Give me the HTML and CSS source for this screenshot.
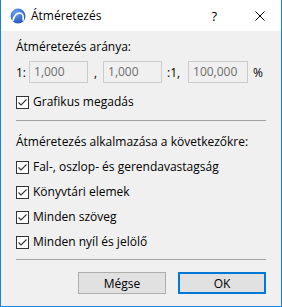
FILE: index.html
```html
<!DOCTYPE html>
<html>
<head>
<meta charset="utf-8">
<link rel="stylesheet" href="styles.css">
</head>
<body>
<div class="window">
  <div class="titlebar">
    <svg class="appicon" width="16" height="16" viewBox="0 0 16 16">
      <defs>
        <radialGradient id="g" cx="0.35" cy="0.3" r="0.8">
          <stop offset="0" stop-color="#6fa3ee"/>
          <stop offset="1" stop-color="#1d4fb8"/>
        </radialGradient>
      </defs>
      <circle cx="8" cy="8" r="7.5" fill="url(#g)"/>
      <path d="M3 12.5 C4 7 8 4 11.5 5.5 C13 6.5 13.5 9 13 12" fill="none" stroke="#fff" stroke-width="1.6" stroke-linecap="round"/>
    </svg>
    <span class="title">Átméretezés</span>
    <span class="help">?</span>
    <svg class="close" width="10" height="10" viewBox="0 0 10 10">
      <path d="M0.5 0.5 L9.5 9.5 M9.5 0.5 L0.5 9.5" stroke="#000" stroke-width="1"/>
    </svg>
  </div>
  <div class="content">
    <div class="label first">Átméretezés aránya:</div>
    <div class="ratio">
      <span class="one">1:</span>
      <span class="field f1">1,000</span>
      <span class="comma">,</span>
      <span class="field f2">1,000</span>
      <span class="colon">:1,</span>
      <span class="field f3">100,000</span>
      <span class="pct">%</span>
    </div>
    <div class="check graf"><span class="box"><svg width="11" height="11" viewBox="0 0 11 11"><path d="M1.5 5.5 L4 8 L9.5 2.5" fill="none" stroke="#333" stroke-width="1.1"/></svg></span>Grafikus megadás</div>
    <div class="sep"></div>
    <div class="label second">Átméretezés alkalmazása a következőkre:</div>
    <div class="checks">
      <div class="check"><span class="box"><svg width="11" height="11" viewBox="0 0 11 11"><path d="M1.5 5.5 L4 8 L9.5 2.5" fill="none" stroke="#333" stroke-width="1.1"/></svg></span>Fal-, oszlop- és gerendavastagság</div>
      <div class="check"><span class="box"><svg width="11" height="11" viewBox="0 0 11 11"><path d="M1.5 5.5 L4 8 L9.5 2.5" fill="none" stroke="#333" stroke-width="1.1"/></svg></span>Könyvtári elemek</div>
      <div class="check"><span class="box"><svg width="11" height="11" viewBox="0 0 11 11"><path d="M1.5 5.5 L4 8 L9.5 2.5" fill="none" stroke="#333" stroke-width="1.1"/></svg></span>Minden szöveg</div>
      <div class="check"><span class="box"><svg width="11" height="11" viewBox="0 0 11 11"><path d="M1.5 5.5 L4 8 L9.5 2.5" fill="none" stroke="#333" stroke-width="1.1"/></svg></span>Minden nyíl és jelölő</div>
    </div>
    <div class="sep sep2"></div>
    <div class="buttons">
      <button class="btn">Mégse</button>
      <button class="btn ok">OK</button>
    </div>
  </div>
</div>
</body>
</html>
```

FILE: styles.css
```css
* { box-sizing: border-box; }
html, body { margin: 0; padding: 0; }
body {
  font-family: "Open Sans", "Noto Sans", sans-serif;
  font-size: 12px;
  color: #000;
  background: #fff;
}
.window {
  width: 282px;
  height: 307px;
  border: 1px solid #1883d7;
  border-top: none;
  background: #f0f0f0;
  display: flex;
  flex-direction: column;
}
.titlebar {
  height: 31px;
  background: #fff;
  display: flex;
  align-items: center;
  padding-left: 9px;
  flex: none;
}
.appicon { flex: none; }
.title {
  margin-left: 5px;
  font-size: 12px;
  line-height: 16px;
  flex: 1;
}
.help {
  font-size: 13px;
  margin-right: 38px;
}
.close { margin-right: 16px; }
.content {
  padding: 0 15px 0 15px;
  display: flex;
  flex-direction: column;
  flex: 1;
}
.label { line-height: 16px; white-space: nowrap; }
.label.first { margin-top: 8px; }
.ratio {
  display: flex;
  align-items: center;
  margin-top: 6px;
  height: 22px;
}
.field {
  height: 22px;
  border: 1px solid #cccccc;
  background: #f0f0f0;
  color: #6d6d6d;
  line-height: 20px;
  padding-left: 4px;
  flex: none;
}
.f1 { width: 59px; margin-left: 3px; }
.comma { width: 15px; text-align: center; }
.f2 { width: 59px; }
.colon { margin-left: 5px; width: 21px; }
.f3 { width: 60px; }
.pct { margin-left: 5px; }
.check {
  display: flex;
  align-items: center;
  line-height: 16px;
  height: 16px;
  white-space: nowrap;
}
.box {
  width: 13px;
  height: 13px;
  border: 1px solid #333;
  background: #fff;
  margin-right: 4px;
  display: flex;
  align-items: center;
  justify-content: center;
  flex: none;
}
.box svg { display: block; }
.graf { margin-top: 11px; }
.sep {
  height: 1px;
  background: #a0a0a0;
  margin-top: 10px;
  width: 250px;
}
.label.second { margin-top: 13px; }
.checks {
  display: flex;
  flex-direction: column;
  gap: 9px;
  margin-top: 9px;
}
.sep2 { margin-top: 9px; }
.buttons {
  display: flex;
  justify-content: flex-end;
  gap: 12px;
  margin-top: 12px;
  width: 250px;
}
.btn {
  width: 88px;
  height: 22px;
  background: #e1e1e1;
  border: 1px solid #adadad;
  font-family: inherit;
  font-size: 12px;
  color: #000;
  padding: 0;
}
.btn.ok { border: 2px solid #0078d7; }
```
